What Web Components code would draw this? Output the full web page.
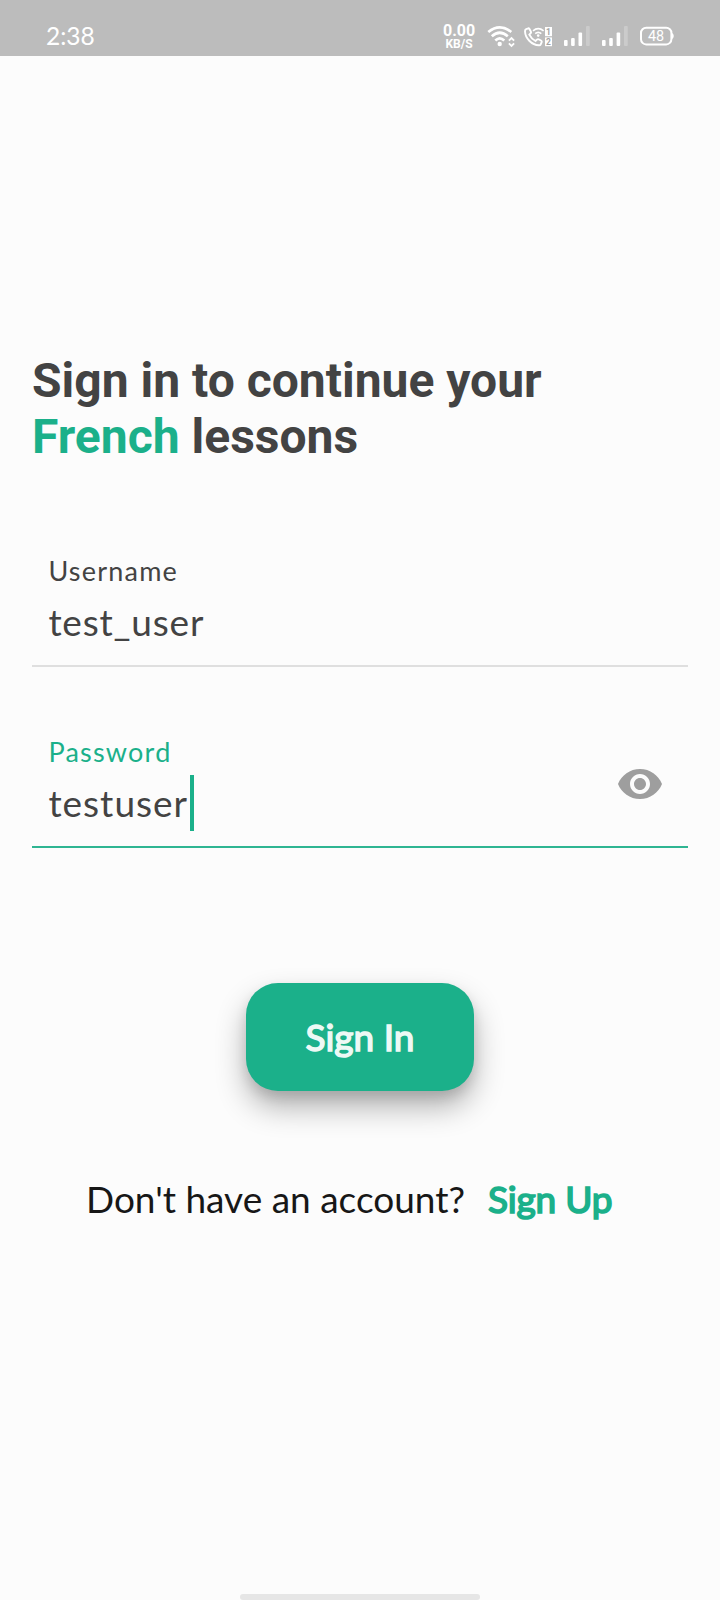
<!DOCTYPE html>
<html lang="en">
<head>
<meta charset="utf-8">
<title>Sign in</title>
<style>
html,body{margin:0;height:100%;background:#fcfcfc}
</style>
</head>
<body>
<login-screen></login-screen>
<script>
const define = (name, html) => customElements.define(name, class extends HTMLElement {
  constructor() {
    super();
    const t = document.createElement('template');
    t.innerHTML = html;
    this.attachShadow({mode: 'open'}).appendChild(t.content.cloneNode(true));
  }
});

define('status-bar', `
<style>
:host{display:flex;box-sizing:border-box;height:56px;background:#bcbcbc;color:#fff;font-family:Lato,sans-serif;justify-content:space-between;align-items:flex-start;padding:21px 46px 0 46px}
.time{font-size:24.5px;line-height:30px}
.right{display:flex;align-items:flex-start;font-family:Roboto,sans-serif}
.net{width:32px;text-align:center;font-weight:700;margin-top:2px}
.net div:first-child{font-size:16px;line-height:16px}
.net div:last-child{font-size:12px;line-height:12px;margin-top:-1px}
svg{display:block}
.icons{margin:3px 0 0 11px}
text{font-family:Roboto,sans-serif}
</style>
<div class="time">2:38</div>
<div class="right">
  <div class="net"><div>0.00</div><div>KB/S</div></div>
  <svg class="icons" width="188" height="24" viewBox="486 24 188 24" fill="none" stroke="#fff">
    <g stroke-width="2.7">
      <path d="M488.3 32Q499.7 22.6 511.3 32"/>
      <path d="M491.8 36.3Q499.7 29.2 507.8 36.3"/>
      <path d="M495.3 40.4Q499.7 36.2 504.3 40.4"/>
    </g>
    <circle cx="499.7" cy="44" r="2.2" fill="#fff" stroke="none"/>
    <path d="M508.9 40.6L511.5 38L514.1 40.6M508.9 43.3L511.5 45.9L514.1 43.3" stroke-width="1.8"/>
    <path d="M526.2 29.2L528.3 28.3Q529 28.2 529.5 29L531 31.8Q531.3 32.7 530.6 33.3L529.3 34.7Q531.3 38.8 535.5 41L537.2 39.4Q537.8 38.9 538.7 39.3L541.3 40.8Q542 41.4 541.7 42.2L540.6 44.6Q540.2 45.4 539 45.3C531.5 45 525.2 38.2 525 31.3Q525 29.7 526.2 29.2Z" stroke-width="1.9"/>
    <path d="M533 30.8Q538.2 26.6 543.6 30.8M535.2 33.6Q538.2 31 541.3 33.6" stroke-width="1.7"/>
    <circle cx="538.2" cy="35.6" r="1.3" fill="#fff" stroke="none"/>
    <g fill="#fff" stroke="none">
      <rect x="545" y="27" width="7" height="9.2"/><rect x="545" y="37.4" width="7" height="8.8"/>
      <rect x="564" y="40" width="3.6" height="6" rx="1"/><rect x="571.1" y="38" width="3.6" height="8" rx="1"/><rect x="578.5" y="32.5" width="3.6" height="13.5" rx="1"/>
      <rect x="602" y="40" width="3.6" height="6" rx="1"/><rect x="609.2" y="38" width="3.6" height="8" rx="1"/><rect x="616.6" y="32.5" width="3.6" height="13.5" rx="1"/>
      <g fill="#cbcbcb"><rect x="586" y="26" width="3.8" height="20" rx="1"/><rect x="624" y="26" width="3.8" height="20" rx="1"/></g>
      <g fill="#a4a4a4" font-size="8.5" font-weight="700" text-anchor="middle"><text x="548.5" y="34.7">1</text><text x="548.5" y="44.9">2</text></g>
      <text x="656" y="41.1" font-size="14.4" text-anchor="middle">48</text>
      <path d="M671.5 32.5Q673.8 33.5 673.8 36T671.5 39.5Z"/>
    </g>
    <rect x="641" y="27.8" width="30.4" height="16.6" rx="5.2" stroke-width="2"/>
  </svg>
</div>`);

define('page-heading', `
<style>
:host{display:block;font:700 48px/56px Roboto,sans-serif;color:#434343}
::slotted(span){color:#1bb08a}
</style><slot></slot>`);

define('text-field', `
<style>
:host{display:flex;box-sizing:border-box;height:112px;border-bottom:2px solid #dfdfdf;padding:0 24px 0 16.4px;font-family:Lato,sans-serif;color:#434343;justify-content:space-between}
:host([focused]){border-color:#2fb592}
.label{font-size:27px;line-height:32px;letter-spacing:1.22px}
:host([focused]) .label{color:#1bb08a}
.row{display:flex;margin-top:6px;height:56px;align-items:flex-start}
.value{font-size:37px;line-height:44px;letter-spacing:.8px;margin-top:7px}
:host([focused]) .value{letter-spacing:1px}
.caret{display:none;width:4px;height:56px;margin:1px 0 0 2.2px;background:#1bb08a}
:host([focused]) .caret{display:block}
</style>
<div><div class="label"><slot name="label"></slot></div>
<div class="row"><div class="value"><slot></slot></div><div class="caret"></div></div></div>
<slot name="icon"></slot>`);

define('eye-icon', `
<style>:host{display:block;margin-top:24px;height:48px}svg{display:block}</style>
<svg width="48" height="48" viewBox="0 0 24 24" fill="#9e9e9e"><path d="M12 4.5C7 4.5 2.73 7.61 1 12c1.73 4.39 6 7.5 11 7.5s9.27-3.11 11-7.5c-1.73-4.39-6-7.5-11-7.5zM12 17c-2.76 0-5-2.24-5-5s2.24-5 5-5 5 2.24 5 5-2.24 5-5 5zm0-8c-1.66 0-3 1.34-3 3s1.34 3 3 3 3-1.34 3-3-1.34-3-3-3z"/></svg>`);

define('primary-button', `
<style>
:host{display:flex;box-sizing:border-box;width:228px;height:108px;border-radius:32px;background:#1bb08a;color:#edf9f5;align-items:center;justify-content:center;font:400 37px/44px Lato,sans-serif;-webkit-text-stroke:1.5px;box-shadow:0 6px 12px rgba(0,0,0,.1),0 16px 30px rgba(0,0,0,.3)}
</style><slot></slot>`);

define('signup-prompt', `
<style>
:host{display:flex;gap:23px;font:400 37px/44px Lato,sans-serif;color:#171717;white-space:nowrap}
.link{color:#1bb08a;-webkit-text-stroke:1.7px;letter-spacing:-.2px}
</style><span><slot></slot></span><span class="link"><slot name="link"></slot></span>`);

define('login-screen', `
<style>
:host{display:flex;flex-direction:column;width:720px;height:1600px;background:#fcfcfc;overflow:hidden}
main{display:flex;flex-direction:column;flex:1;padding:297px 32px 0}
.fields{display:flex;flex-direction:column;gap:69px;margin-top:90px}
primary-button{align-self:center;margin-top:135px}
signup-prompt{margin:86px 0 0 54px}
.home{width:240px;height:6px;border-radius:3px;background:#e6e6e6;align-self:center}
</style>
<status-bar></status-bar>
<main>
  <page-heading>Sign in to continue your<br><span>French</span> lessons</page-heading>
  <div class="fields">
    <text-field><span slot="label">Username</span>test_user</text-field>
    <text-field focused><span slot="label">Password</span>testuser<eye-icon slot="icon"></eye-icon></text-field>
  </div>
  <primary-button>Sign In</primary-button>
  <signup-prompt>Don't have an account?<span slot="link">Sign Up</span></signup-prompt>
</main>
<div class="home"></div>`);
</script>
</body>
</html>
